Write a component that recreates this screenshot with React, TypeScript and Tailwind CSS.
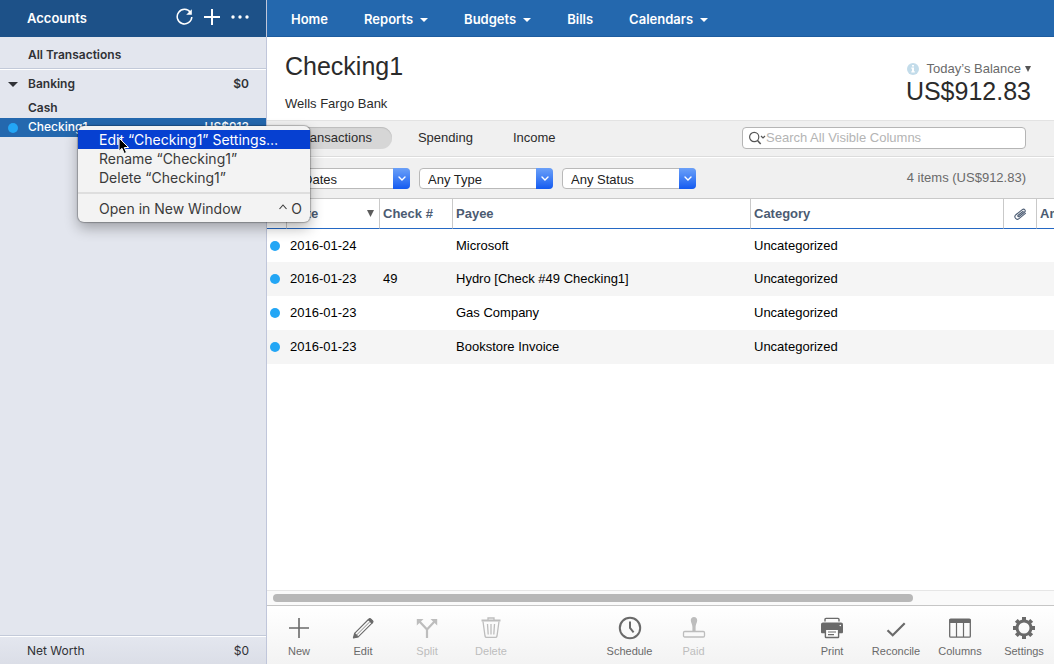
import type { ReactNode } from "react";

type Tool = { label: string; icon: ReactNode; disabled?: boolean };

const HELVETICA = "font-['Liberation_Sans',Arial,sans-serif]";

function Caret() {
  return (
    <svg className="h-1 w-2" viewBox="0 0 8 4" aria-hidden="true">
      <path d="M0 0h8L4 4z" fill="currentColor" />
    </svg>
  );
}

const navItems = [
  { label: "Home", menu: false },
  { label: "Reports", menu: true },
  { label: "Budgets", menu: true },
  { label: "Bills", menu: false },
  { label: "Calendars", menu: true },
];

const transactions = [
  { date: "2016-01-24", check: "", payee: "Microsoft", category: "Uncategorized" },
  { date: "2016-01-23", check: "49", payee: "Hydro [Check #49 Checking1]", category: "Uncategorized" },
  { date: "2016-01-23", check: "", payee: "Gas Company", category: "Uncategorized" },
  { date: "2016-01-23", check: "", payee: "Bookstore Invoice", category: "Uncategorized" },
];

const editTools: Tool[] = [
  {
    label: "New",
    icon: <path d="M12 2v20M2 12h20" stroke="currentColor" strokeWidth="1.6" fill="none" />,
  },
  {
    label: "Edit",
    icon: (
      <g fill="none" stroke="currentColor" strokeWidth="1.1" strokeLinejoin="round">
        <path d="M3.600 17.300L17.400 3.500l3.600 3.600L7.200 20.900" />
        <path d="M5.600 19L18.600 6" strokeWidth=".8" />
        <path d="M2.400 22l1.200-4.700 3.600 3.600z" fill="currentColor" />
        <path d="M17.400 3.500l.7-.7c.5-.5 1-.5 1.500 0l2.100 2.100c.5.500.5 1 0 1.500l-.7.700z" fill="currentColor" />
      </g>
    ),
  },
  {
    label: "Split",
    disabled: true,
    icon: (
      <g>
        <path d="M12 22v-8.500L4.500 5.500M12 13.500l7.500-8" stroke="currentColor" strokeWidth="2.200" fill="none" />
        <path d="M1.800 3h6.700L1.800 9.500zM22.200 3h-6.700l6.700 6.500z" fill="currentColor" />
      </g>
    ),
  },
  {
    label: "Delete",
    disabled: true,
    icon: (
      <g fill="none" stroke="currentColor" strokeWidth="1.300">
        <path d="M2.500 4.500h19" strokeWidth="2" />
        <path d="M9 4V2h6v2" />
        <path d="M4 5.500l2 14.500c.2 1 .7 1.400 1.500 1.400h9c.8 0 1.300-.4 1.500-1.400l2-14.500" />
        <path d="M8.500 8l.7 10.500M12 8v10.500M15.500 8l-.7 10.500" />
      </g>
    ),
  },
];

const statusTools: Tool[] = [
  {
    label: "Schedule",
    icon: (
      <g fill="none" stroke="currentColor" strokeWidth="2">
        <circle cx="12" cy="12" r="10.200" />
        <path d="M12 5.500V12l3.600 4.300" />
      </g>
    ),
  },
  {
    label: "Paid",
    disabled: true,
    icon: (
      <g>
        <path d="M12 1c2 0 3.200 1.300 3.200 3.300 0 2.500-1.600 4.200-1.600 6.700v4h-3.200v-4c0-2.500-1.600-4.200-1.600-6.700C8.800 2.300 10 1 12 1z" fill="currentColor" />
        <rect x="1.500" y="15.500" width="21" height="5.500" rx="1.200" fill="none" stroke="currentColor" strokeWidth="1.300" />
      </g>
    ),
  },
];

const viewTools: Tool[] = [
  {
    label: "Print",
    icon: (
      <g>
        <path d="M5 5.500V3.400c0-.6.4-1 1-1h12c.6 0 1 .4 1 1v2.100" fill="none" stroke="currentColor" strokeWidth="1.400" />
        <path d="M3 6.500h18c1.200 0 2 .8 2 2V16c0 .8-.5 1.300-1.300 1.300H2.300C1.500 17.300 1 16.800 1 16V8.500c0-1.200.8-2 2-2z" fill="currentColor" />
        <rect x="5.400" y="13.200" width="13.200" height="8.300" rx=".6" fill="#fdfdfd" stroke="currentColor" strokeWidth="1.400" />
        <path d="M8 16h8M8 18.600h6" stroke="currentColor" strokeWidth="1.100" />
        <circle cx="20.300" cy="9.500" r=".8" fill="#fdfdfd" />
      </g>
    ),
  },
  {
    label: "Reconcile",
    icon: <path d="M3.500 14.300l5.200 5L20.700 7.200" fill="none" stroke="currentColor" strokeWidth="2.200" />,
  },
  {
    label: "Columns",
    icon: (
      <g>
        <rect x="1.700" y="3.200" width="20.600" height="18" rx="1" fill="none" stroke="currentColor" strokeWidth="1.300" />
        <path d="M1.500 3h21v4h-21z" fill="currentColor" />
        <path d="M8.500 6v15M15.500 6v15" stroke="currentColor" strokeWidth="1.200" />
      </g>
    ),
  },
  {
    label: "Settings",
    icon: (
      <g>
        <circle cx="12" cy="12" r="7" fill="none" stroke="currentColor" strokeWidth="3" />
        <g stroke="currentColor" strokeWidth="4">
          <path d="M12 4.800V1M12 19.200V23M4.800 12H1M19.200 12H23" />
          <path d="M6.900 6.900L4.300 4.300M17.100 17.100l2.600 2.600M6.900 17.100l-2.600 2.600M17.100 6.900l2.600-2.600" />
        </g>
      </g>
    ),
  },
];

function ToolGroup({ tools }: { tools: Tool[] }) {
  return (
    <div className="flex">
      {tools.map((tool) => (
        <button
          key={tool.label}
          type="button"
          disabled={tool.disabled}
          className="flex w-16 flex-col items-center gap-[3px] text-[11px] leading-4 text-[#6a6a6a] disabled:text-[#bdbdbd]"
        >
          <svg className="size-6" viewBox="0 0 24 24" aria-hidden="true">
            {tool.icon}
          </svg>
          {tool.label}
        </button>
      ))}
    </div>
  );
}

function FilterSelect({ name, value }: { name: string; value: string }) {
  return (
    <div className="grid w-[134px] items-center">
      <select
        aria-label={name}
        className="col-start-1 row-start-1 h-[21px] w-full appearance-none rounded border border-[#b9b9b9] bg-white pl-2 pt-0.5 text-[13px] leading-[17px] text-[#222]"
      >
        <option>{value}</option>
      </select>
      <span className="pointer-events-none col-start-1 row-start-1 flex h-[21px] w-[17px] items-center justify-center justify-self-end rounded-r bg-linear-to-b from-[#6ba0f8] to-[#1259f0]">
        <svg className="h-[5px] w-2" viewBox="0 0 8 5" aria-hidden="true">
          <path d="M1 1l3 3 3-3" fill="none" stroke="white" strokeWidth="1.4" strokeLinecap="round" />
        </svg>
      </span>
    </div>
  );
}

function ContextMenu() {
  const item = "flex h-[19px] w-full items-center justify-between pl-[21px] pr-2 text-left";
  return (
    <div
      role="menu"
      className="absolute left-[78px] top-2 z-20 w-[232px] rounded-md bg-[#f3f3f3] py-1 text-sm font-normal text-[#3a3a3a] shadow-[0_0_1px_1px_rgba(0,0,0,0.25),0_6px_14px_rgba(0,0,0,0.3)]"
    >
      <button type="button" role="menuitem" className={`${item} bg-[#0640d1] text-white`}>
        Edit “Checking1” Settings…
      </button>
      <button type="button" role="menuitem" className={item}>
        Rename “Checking1”
      </button>
      <button type="button" role="menuitem" className={item}>
        Delete “Checking1”
      </button>
      <div className="mb-[5px] mt-[5px] h-0.5 bg-[#dedede]" />
      <button type="button" role="menuitem" className={item}>
        <span>Open in New Window</span>
        <span className="flex items-center gap-1">
          <svg className="mb-1 h-1.5 w-2" viewBox="0 0 8 6" aria-hidden="true">
            <path d="M.5 5L4 1l3.500 4" fill="none" stroke="currentColor" strokeWidth="1.100" />
          </svg>
          O
        </span>
      </button>
      <svg className="absolute left-10 top-[11px] h-[18px] w-3" viewBox="0 0 12 18" aria-hidden="true">
        <path d="M1 1v13.200l3-2.900 2.200 5.200 2.300-1-2.200-5H10.600z" fill="black" stroke="white" strokeWidth="1" />
      </svg>
    </div>
  );
}

function Sidebar() {
  return (
    <aside className="flex w-[267px] shrink-0 flex-col border-r border-[#c0c6da] bg-[#e3e6ee] font-['Inter',sans-serif] text-xs font-semibold text-[#303236]">
      <header className="flex h-[37px] items-center bg-[#1d5188] pl-[27px] pr-4 text-white">
        <h2 className="flex-1 text-[13px]">Accounts</h2>
        <div className="flex items-center gap-2.5 pb-[3px]">
          <button type="button" aria-label="Refresh">
            <svg className="block size-[18px]" viewBox="0 0 18 18" aria-hidden="true">
              <path d="M14.500 4.500A7.300 7.300 0 1 0 15.800 9" fill="none" stroke="white" strokeWidth="1.500" />
              <path d="M15.800 1.200v5.600h-5.600z" fill="white" />
            </svg>
          </button>
          <button type="button" aria-label="Add account">
            <svg className="block size-4" viewBox="0 0 16 16" aria-hidden="true">
              <path d="M8 0v16M0 8h16" stroke="white" strokeWidth="2" />
            </svg>
          </button>
          <button type="button" aria-label="More">
            <svg className="block h-4 w-5" viewBox="0 0 20 16" aria-hidden="true">
              <g fill="white">
                <circle cx="3" cy="8" r="1.700" />
                <circle cx="10" cy="8" r="1.700" />
                <circle cx="17" cy="8" r="1.700" />
              </g>
            </svg>
          </button>
        </div>
      </header>
      <div className="flex h-8 items-center border-b border-[#c3cad9] pl-7 pt-1">All Transactions</div>
      <div className="flex h-[29px] items-center border-t border-white pr-[17px]">
        <span className="flex w-7 pl-2">
          <svg className="h-[5px] w-2.5" viewBox="0 0 10 5" aria-hidden="true">
            <path d="M0 0h10L5 5z" fill="#303236" />
          </svg>
        </span>
        <span className="flex-1">Banking</span>
        <span>$0</span>
      </div>
      <div className="flex h-5 items-center pl-7">Cash</div>
      <div className="relative flex h-[19px] items-center bg-[#2468ae] pr-[17px] font-medium text-white">
        <span className="flex w-7 pl-2">
          <span className="size-2.5 rounded-full bg-[#23a6f5]" />
        </span>
        <span className="flex-1 pb-0.5">Checking1</span>
        <span className="pb-0.5">US$913</span>
        <ContextMenu />
      </div>
      <footer className="mt-auto flex h-[29px] items-center justify-between border-t border-[#c3cad9] bg-linear-to-b from-[#e4e7ef] to-[#dbdee7] pl-[27px] pr-[17px] pt-0.5 font-normal shadow-[inset_0_1px_0_white]">
        <span>Net Worth</span>
        <span>$0</span>
      </footer>
    </aside>
  );
}

function TransactionTable() {
  const head = "border-r border-[#c9c9c9] pl-[3px] text-left font-bold";
  return (
    <div className="flex-1 overflow-hidden">
      <table className="w-[950px] min-w-full table-fixed border-separate border-spacing-0 text-[13px] text-black">
        <colgroup>
          <col className="w-5" />
          <col className="w-[93px]" />
          <col className="w-[73px]" />
          <col className="w-[298px]" />
          <col className="w-[253px]" />
          <col className="w-[33px]" />
          <col />
        </colgroup>
        <thead>
          <tr className="h-[30px] text-[#4b5b72] *:border-b *:border-b-[#2468c4]">
            <th className={head} aria-label="Status" />
            <th className={head}>
              <span className="flex items-center justify-between pr-[5px]">
                Date
                <svg className="h-[7px] w-[7px]" viewBox="0 0 7 7" aria-hidden="true">
                  <path d="M0 0h7L3.500 7z" fill="#5c5c5c" />
                </svg>
              </span>
            </th>
            <th className={head}>Check #</th>
            <th className={head}>Payee</th>
            <th className={head}>Category</th>
            <th className="border-r border-[#c9c9c9] p-0" aria-label="Attachments">
              <svg className="mx-auto h-3 w-3.5" viewBox="0 0 14 12" aria-hidden="true">
                <path
                  d="M10.200 3.300L5.200 7.300c-.9.700 0 1.900.9 1.200l5.300-4.200c1.900-1.600-.1-4.200-2.100-2.700L2.900 6.700c-2.600 2.200.4 6 3.100 3.900l6.400-5.200"
                  fill="none"
                  stroke="currentColor"
                  strokeWidth="1.100"
                  strokeLinecap="round"
                />
              </svg>
            </th>
            <th className={head}>Amount</th>
          </tr>
        </thead>
        <tbody>
          {transactions.map((t) => (
            <tr key={t.payee} className="h-[34px] first:h-[33px] even:bg-[#f5f5f5] *:p-0 *:pl-[3px]">
              <td>
                <span className="block size-2.5 rounded-full bg-[#23a6f5]" />
              </td>
              <td>{t.date}</td>
              <td>{t.check}</td>
              <td>{t.payee}</td>
              <td>{t.category}</td>
              <td />
              <td />
            </tr>
          ))}
        </tbody>
      </table>
    </div>
  );
}

export default function App() {
  return (
    <div className="flex min-h-screen bg-white">
      <Sidebar />
      <main className={`flex min-w-0 flex-1 flex-col ${HELVETICA}`}>
        <nav className="flex h-[37px] items-center gap-9 border-b border-[#1d5c9f] bg-[#2468ae] pl-6 pt-1 font-['Inter',sans-serif] text-[13px] font-semibold text-white">
          {navItems.map((n) => (
            <a key={n.label} href="#" className="flex items-center gap-[7px]">
              {n.label}
              {n.menu && <Caret />}
            </a>
          ))}
        </nav>

        <header className="flex h-[83px] justify-between pl-[18px] pr-[23px] text-[#2b2b2b]">
          <div className="pt-3.5">
            <h1 className="text-[25px] leading-[30px]">Checking1</h1>
            <p className="pt-[15px] text-[13px] leading-4">Wells Fargo Bank</p>
          </div>
          <div className="flex flex-col items-end pt-6">
            <button type="button" className="flex items-center text-[13px] leading-4 text-[#6a6a6a]">
              <svg className="mr-2 size-3" viewBox="0 0 12 12" aria-hidden="true">
                <circle cx="6" cy="6" r="6" fill="#c3dcea" />
                <path d="M5 2h2v1.600H5zM4.300 4.600H7v3.700h.8v1.100H4.300V8.300H5V5.700h-.7z" fill="white" />
              </svg>
              Today’s Balance
              <svg className="ml-1 size-1.5" viewBox="0 0 6 6" aria-hidden="true">
                <path d="M0 0h6L3 6z" fill="#555" />
              </svg>
            </button>
            <p className="text-[25px] leading-7">US$912.83</p>
          </div>
        </header>

        <div className="flex h-[37px] items-center justify-between border-y border-b-[#dcdcdc] border-t-[#e3e3e3] bg-[#f0f0f0] pb-px pl-[11px] pr-7 text-[13px] text-[#2b2b2b]">
          <div className="flex items-center" role="tablist">
            <button type="button" role="tab" aria-selected="true" className="mr-1.5 h-[22px] rounded-full bg-[#d6d6d6] px-5 shadow-[inset_0_1px_1px_#bcbcbc]">
              Transactions
            </button>
            <button type="button" role="tab" className="h-[22px] px-5">
              Spending
            </button>
            <button type="button" role="tab" className="h-[22px] px-5">
              Income
            </button>
          </div>
          <label className="flex h-[22px] w-[284px] items-center rounded border border-[#b5b5b5] bg-white pl-1.5">
            <svg className="h-3.5 w-[17px] shrink-0" viewBox="0 0 17 14" aria-hidden="true">
              <circle cx="5.200" cy="6" r="4.600" fill="none" stroke="#555" strokeWidth="1.200" />
              <path d="M8.500 9.500l3.200 3.500" stroke="#555" strokeWidth="1.500" />
              <path d="M12 5l2 2 2-2" fill="none" stroke="#555" strokeWidth="1.200" />
            </svg>
            <input
              type="text"
              aria-label="Search"
              placeholder="Search All Visible Columns"
              className="w-full min-w-0 bg-transparent outline-none placeholder:text-[#b4b4b4]"
            />
          </label>
        </div>

        <div className="flex h-[42px] items-center gap-[9px] border-b border-t border-b-[#c9c9c9] border-t-white bg-[#f0f0f0] pl-[9px] pr-7">
          <FilterSelect name="Date filter" value="All Dates" />
          <FilterSelect name="Type filter" value="Any Type" />
          <FilterSelect name="Status filter" value="Any Status" />
          <p className="ml-auto text-[13px] text-[#6a6a6a]">4 items (US$912.83)</p>
        </div>

        <TransactionTable />

        <div className="border-b border-t border-b-[#c6c6c6] border-t-[#e6e6e6] bg-[#fafafa] py-[3px] pl-1.5">
          <div className="h-2 w-[82%] rounded-full bg-[#b8b8b8]" />
        </div>

        <footer className="flex h-[58px] justify-between bg-linear-to-b from-white to-[#f3f3f3] pt-2.5">
          <ToolGroup tools={editTools} />
          <ToolGroup tools={statusTools} />
          <div className="-mr-0.5">
            <ToolGroup tools={viewTools} />
          </div>
        </footer>
      </main>
    </div>
  );
}
